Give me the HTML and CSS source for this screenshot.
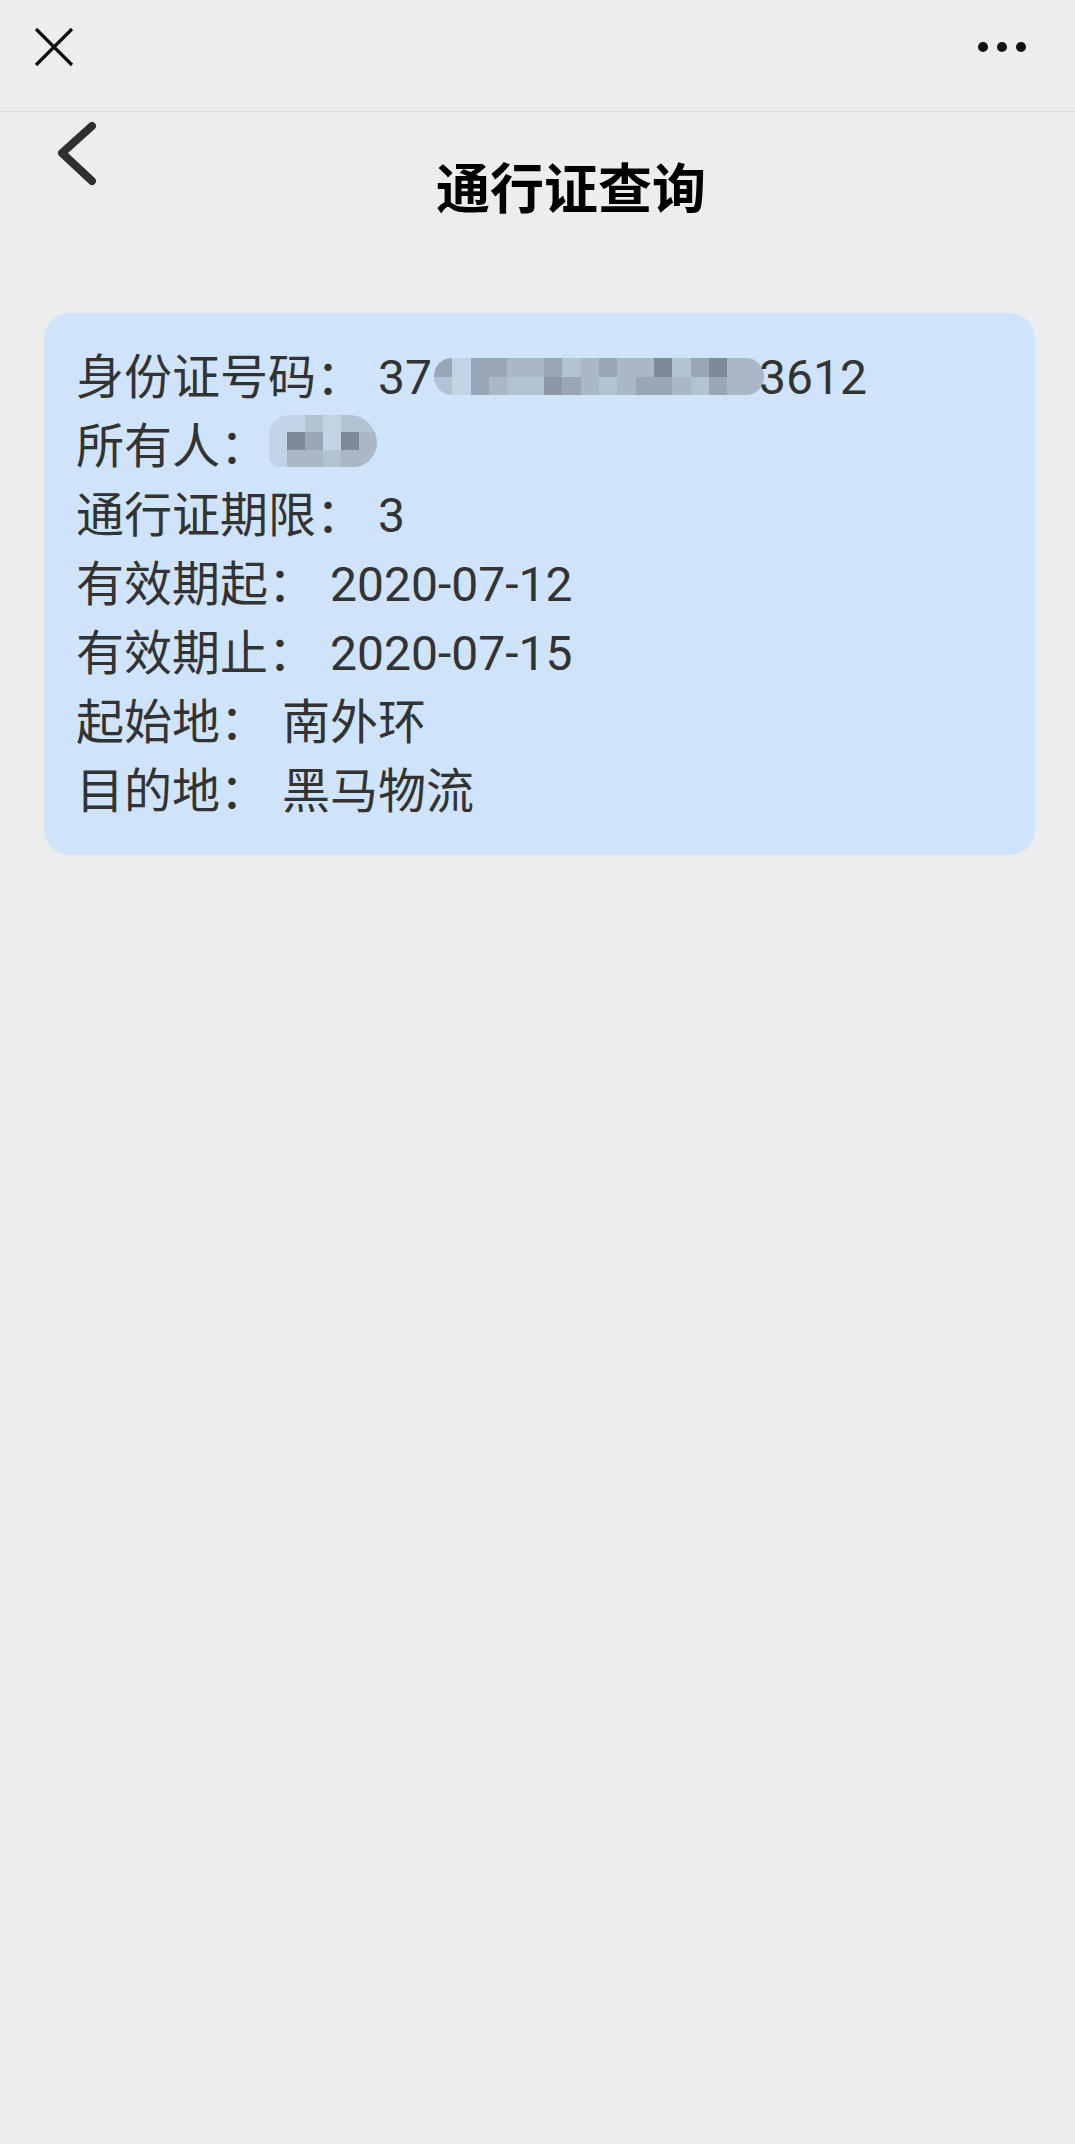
FILE: index.html
```html
<!DOCTYPE html>
<html lang="zh-CN">
<head>
<meta charset="utf-8">
<title>通行证查询</title>
<link rel="stylesheet" href="styles.css">
</head>
<body>
<div class="topbar">
  <svg class="close" width="40" height="40" viewBox="0 0 40 40"><path d="M2 2 L38 38 M38 2 L2 38" stroke="#111" stroke-width="3.2" fill="none"/></svg>
  <svg class="more" width="52" height="12" viewBox="0 0 52 12"><circle cx="6" cy="6" r="5" fill="#111"/><circle cx="25" cy="6" r="5" fill="#111"/><circle cx="44" cy="6" r="5" fill="#111"/></svg>
</div>
<div class="nav">
  <svg class="back" width="100" height="90" viewBox="0 0 100 90"><path d="M92 14 L62 41 L92 69" stroke="#2f2f2f" stroke-width="8" fill="none" stroke-linecap="round" stroke-linejoin="round"/></svg>
  <h1 class="title">通行证查询</h1>
</div>
<div class="card">
  <div class="row"><span class="label">身份证号码：</span><span class="val">37<span class="mosaic mid"><i class="k2"></i><i class="k5"></i><i class="k2"></i><i class="k2"></i><i class="k3"></i><i class="k3"></i><i class="k2"></i><i class="k4"></i><i class="k3"></i><i class="k2"></i><i class="k3"></i><i class="k3"></i><i class="k1"></i><i class="k4"></i><i class="k2"></i><i class="k1"></i><i class="k3"></i><i class="k3"></i><i class="k4"></i><i class="k5"></i><i class="k2"></i><i class="k3"></i><i class="k4"></i><i class="k4"></i><i class="k6"></i><i class="k2"></i><i class="k3"></i><i class="k4"></i><i class="k3"></i><i class="k2"></i><i class="k2"></i><i class="k3"></i><i class="k4"></i><i class="k2"></i><i class="k3"></i><i class="k3"></i></span>3612</span></div>
  <div class="row"><span class="label">所有人：</span><span class="mosaic name"><i class="k5"></i><i class="k5"></i><i class="k4"></i><i class="k5"></i><i class="k4"></i><i class="k4"></i><i class="k5"></i><i class="k1"></i><i class="k2"></i><i class="k5"></i><i class="k1"></i><i class="k3"></i><i class="k5"></i><i class="k3"></i><i class="k3"></i><i class="k4"></i><i class="k3"></i><i class="k3"></i></span></div>
  <div class="row"><span class="label">通行证期限：</span><span class="val">3</span></div>
  <div class="row"><span class="label">有效期起：</span><span class="val">2020-07-12</span></div>
  <div class="row"><span class="label">有效期止：</span><span class="val">2020-07-15</span></div>
  <div class="row"><span class="label">起始地：</span><span class="val">南外环</span></div>
  <div class="row"><span class="label">目的地：</span><span class="val">黑马物流</span></div>
</div>
</body>
</html>
```
FILE: styles.css
```css
html, body {
  margin: 0;
  padding: 0;
  background: #ededed;
}
body {
  width: 1075px;
  min-height: 2144px;
  font-family: Roboto, "Noto Sans CJK SC", sans-serif;
}
.topbar {
  height: 111px;
  border-bottom: 1px solid #dcdcdc;
  display: flex;
  justify-content: space-between;
  align-items: flex-start;
}
.close {
  display: block;
  margin: 27px 0 0 34px;
}
.more {
  display: block;
  margin: 41px 46px 0 0;
}
.nav {
  display: flex;
  align-items: flex-start;
}
.back {
  display: block;
  flex: none;
}
.title {
  flex: 1;
  margin: 44px 33px 0 0;
  text-align: center;
  font-family: "Noto Sans CJK SC", sans-serif;
  font-size: 54px;
  line-height: 60px;
  font-weight: 700;
  color: #000;
}
.card {
  margin: 97px 40px 0 44px;
  background: #cfe4fa;
  border-radius: 25px;
  padding: 26px 33px 33px 32px;
  color: #333;
  font-size: 48px;
  line-height: 69px;
}
.row {
  height: 69px;
  white-space: nowrap;
}
.label {
  font-family: "Noto Sans CJK SC", sans-serif;
}
.val {
  margin-left: 14px;
}
.mosaic {
  display: inline-grid;
  vertical-align: top;
  overflow: hidden;
}
.mosaic i {
  display: block;
}
.mosaic.mid {
  width: 330px;
  height: 37px;
  margin: 19px -5px 0 2px;
  grid-template-columns: repeat(18, 1fr);
  grid-template-rows: 1fr 1fr;
  border-radius: 18px;
}
.mosaic.name {
  width: 108px;
  height: 52px;
  margin: 7px 0 0 1px;
  grid-template-columns: repeat(6, 1fr);
  grid-template-rows: repeat(3, 1fr);
  border-radius: 22px 30px 26px 12px;
}
.k1 { background: #7f8a99; }
.k2 { background: #98a6b6; }
.k3 { background: #a9b7c7; }
.k4 { background: #b4c3d4; }
.k5 { background: #c3d2e4; }
.k6 { background: #8c98a8; }
```
